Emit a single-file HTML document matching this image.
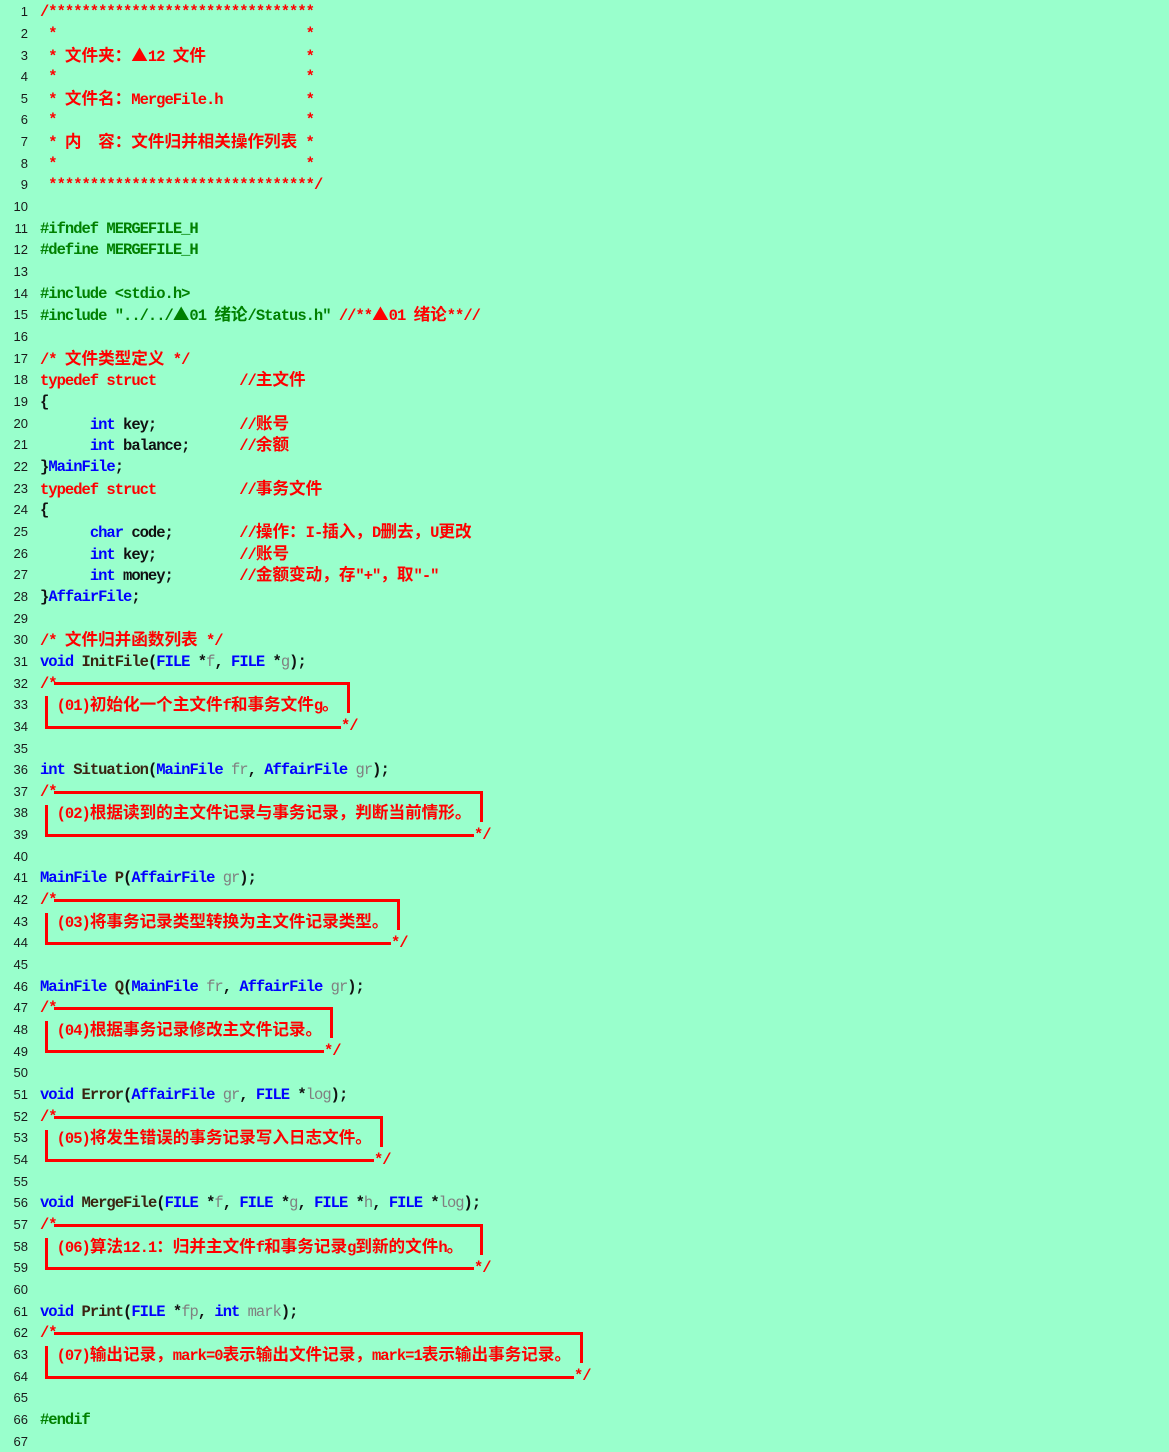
<!DOCTYPE html>
<html><head><meta charset="utf-8">
<style>
html,body{margin:0;padding:0;}
body{width:1169px;height:1451px;background:#99FFCC;position:relative;overflow:hidden;}
#code{position:absolute;left:0;top:1.2px;}
.r{height:21.67px;line-height:21.67px;white-space:pre;position:relative;}
.n{position:absolute;left:0;width:28px;text-align:right;font-family:"Liberation Sans",sans-serif;font-size:13px;color:#1a1a1a;}
.t{position:absolute;left:40px;top:1px;font-family:"Liberation Mono",monospace;font-size:15.5px;letter-spacing:-1px;font-weight:bold;color:#111;line-height:21.67px;}
.z{font-family:"Noto Sans CJK SC",sans-serif;font-size:16.6px;letter-spacing:0;font-weight:bold;line-height:1;vertical-align:baseline;}
.c{color:#FF0000;}
.k{color:#0000FF;}
.p{color:#008000;}
.f{color:#3a2412;}
.g{color:#808080;font-weight:normal;}
.b{position:absolute;background:#FF0000;}
.e{position:absolute;font-family:"Liberation Mono",monospace;font-size:15.5px;letter-spacing:-1px;font-weight:bold;color:#FF0000;line-height:21.67px;height:21.67px;}
</style></head><body>
<div id="code">
<div class="r"><span class="n">1</span><span class="t c">/********************************</span></div>
<div class="r"><span class="n">2</span><span class="t c"> *                              *</span></div>
<div class="r"><span class="n">3</span><span class="t c"> * <span class="z">文件夹：▲</span>12 <span class="z">文件</span>            *</span></div>
<div class="r"><span class="n">4</span><span class="t c"> *                              *</span></div>
<div class="r"><span class="n">5</span><span class="t c"> * <span class="z">文件名：</span>MergeFile.h          *</span></div>
<div class="r"><span class="n">6</span><span class="t c"> *                              *</span></div>
<div class="r"><span class="n">7</span><span class="t c"> * <span class="z">内</span>  <span class="z">容：文件归并相关操作列表</span> *</span></div>
<div class="r"><span class="n">8</span><span class="t c"> *                              *</span></div>
<div class="r"><span class="n">9</span><span class="t c"> ********************************/</span></div>
<div class="r"><span class="n">10</span></div>
<div class="r"><span class="n">11</span><span class="t p">#ifndef MERGEFILE_H</span></div>
<div class="r"><span class="n">12</span><span class="t p">#define MERGEFILE_H</span></div>
<div class="r"><span class="n">13</span></div>
<div class="r"><span class="n">14</span><span class="t p">#include &lt;stdio.h&gt;</span></div>
<div class="r"><span class="n">15</span><span class="t"><span class="p">#include "../../<span class="z">▲</span>01 <span class="z">绪论</span>/Status.h"</span> <span class="c">//**<span class="z">▲</span>01 <span class="z">绪论</span>**//</span></span></div>
<div class="r"><span class="n">16</span></div>
<div class="r"><span class="n">17</span><span class="t c">/* <span class="z">文件类型定义</span> */</span></div>
<div class="r"><span class="n">18</span><span class="t c">typedef struct          //<span class="z">主文件</span></span></div>
<div class="r"><span class="n">19</span><span class="t">{</span></div>
<div class="r"><span class="n">20</span><span class="t">      <span class="k">int</span> key;          <span class="c">//<span class="z">账号</span></span></span></div>
<div class="r"><span class="n">21</span><span class="t">      <span class="k">int</span> balance;      <span class="c">//<span class="z">余额</span></span></span></div>
<div class="r"><span class="n">22</span><span class="t">}<span class="k">MainFile</span>;</span></div>
<div class="r"><span class="n">23</span><span class="t c">typedef struct          //<span class="z">事务文件</span></span></div>
<div class="r"><span class="n">24</span><span class="t">{</span></div>
<div class="r"><span class="n">25</span><span class="t">      <span class="k">char</span> code;        <span class="c">//<span class="z">操作：</span>I-<span class="z">插入，</span>D<span class="z">删去，</span>U<span class="z">更改</span></span></span></div>
<div class="r"><span class="n">26</span><span class="t">      <span class="k">int</span> key;          <span class="c">//<span class="z">账号</span></span></span></div>
<div class="r"><span class="n">27</span><span class="t">      <span class="k">int</span> money;        <span class="c">//<span class="z">金额变动，存</span>"+"<span class="z">，取</span>"-"</span></span></div>
<div class="r"><span class="n">28</span><span class="t">}<span class="k">AffairFile</span>;</span></div>
<div class="r"><span class="n">29</span></div>
<div class="r"><span class="n">30</span><span class="t c">/* <span class="z">文件归并函数列表</span> */</span></div>
<div class="r"><span class="n">31</span><span class="t"><span class="k">void</span> <span class="f">InitFile</span>(<span class="k">FILE</span> *<span class="g">f</span>, <span class="k">FILE</span> *<span class="g">g</span>);</span></div>
<div class="r"><span class="n">32</span><span class="t c">/*</span></div>
<div class="r"><span class="n">33</span><span class="t c">  (01)<span class="z">初始化一个主文件</span>f<span class="z">和事务文件</span>g<span class="z">。</span></span></div>
<div class="r"><span class="n">34</span></div>
<div class="r"><span class="n">35</span></div>
<div class="r"><span class="n">36</span><span class="t"><span class="k">int</span> <span class="f">Situation</span>(<span class="k">MainFile</span> <span class="g">fr</span>, <span class="k">AffairFile</span> <span class="g">gr</span>);</span></div>
<div class="r"><span class="n">37</span><span class="t c">/*</span></div>
<div class="r"><span class="n">38</span><span class="t c">  (02)<span class="z">根据读到的主文件记录与事务记录，判断当前情形。</span></span></div>
<div class="r"><span class="n">39</span></div>
<div class="r"><span class="n">40</span></div>
<div class="r"><span class="n">41</span><span class="t"><span class="k">MainFile</span> <span class="f">P</span>(<span class="k">AffairFile</span> <span class="g">gr</span>);</span></div>
<div class="r"><span class="n">42</span><span class="t c">/*</span></div>
<div class="r"><span class="n">43</span><span class="t c">  (03)<span class="z">将事务记录类型转换为主文件记录类型。</span></span></div>
<div class="r"><span class="n">44</span></div>
<div class="r"><span class="n">45</span></div>
<div class="r"><span class="n">46</span><span class="t"><span class="k">MainFile</span> <span class="f">Q</span>(<span class="k">MainFile</span> <span class="g">fr</span>, <span class="k">AffairFile</span> <span class="g">gr</span>);</span></div>
<div class="r"><span class="n">47</span><span class="t c">/*</span></div>
<div class="r"><span class="n">48</span><span class="t c">  (04)<span class="z">根据事务记录修改主文件记录。</span></span></div>
<div class="r"><span class="n">49</span></div>
<div class="r"><span class="n">50</span></div>
<div class="r"><span class="n">51</span><span class="t"><span class="k">void</span> <span class="f">Error</span>(<span class="k">AffairFile</span> <span class="g">gr</span>, <span class="k">FILE</span> *<span class="g">log</span>);</span></div>
<div class="r"><span class="n">52</span><span class="t c">/*</span></div>
<div class="r"><span class="n">53</span><span class="t c">  (05)<span class="z">将发生错误的事务记录写入日志文件。</span></span></div>
<div class="r"><span class="n">54</span></div>
<div class="r"><span class="n">55</span></div>
<div class="r"><span class="n">56</span><span class="t"><span class="k">void</span> <span class="f">MergeFile</span>(<span class="k">FILE</span> *<span class="g">f</span>, <span class="k">FILE</span> *<span class="g">g</span>, <span class="k">FILE</span> *<span class="g">h</span>, <span class="k">FILE</span> *<span class="g">log</span>);</span></div>
<div class="r"><span class="n">57</span><span class="t c">/*</span></div>
<div class="r"><span class="n">58</span><span class="t c">  (06)<span class="z">算法</span>12.1<span class="z">：归并主文件</span>f<span class="z">和事务记录</span>g<span class="z">到新的文件</span>h<span class="z">。</span></span></div>
<div class="r"><span class="n">59</span></div>
<div class="r"><span class="n">60</span></div>
<div class="r"><span class="n">61</span><span class="t"><span class="k">void</span> <span class="f">Print</span>(<span class="k">FILE</span> *<span class="g">fp</span>, <span class="k">int</span> <span class="g">mark</span>);</span></div>
<div class="r"><span class="n">62</span><span class="t c">/*</span></div>
<div class="r"><span class="n">63</span><span class="t c">  (07)<span class="z">输出记录，</span>mark=0<span class="z">表示输出文件记录，</span>mark=1<span class="z">表示输出事务记录。</span></span></div>
<div class="r"><span class="n">64</span></div>
<div class="r"><span class="n">65</span></div>
<div class="r"><span class="n">66</span><span class="t p">#endif</span></div>
<div class="r"><span class="n">67</span></div>
</div>

<div class="b" style="left:54px;top:682px;width:295px;height:3px"></div>
<div class="b" style="left:347px;top:682px;width:3px;height:31px"></div>
<div class="b" style="left:45px;top:696px;width:3px;height:33px"></div>
<div class="b" style="left:45px;top:726px;width:296px;height:3px"></div>
<div class="e" style="left:341px;top:716px">*/</div>

<div class="b" style="left:54px;top:791px;width:428px;height:3px"></div>
<div class="b" style="left:480px;top:791px;width:3px;height:31px"></div>
<div class="b" style="left:45px;top:805px;width:3px;height:32px"></div>
<div class="b" style="left:45px;top:834px;width:429px;height:3px"></div>
<div class="e" style="left:474px;top:825px">*/</div>

<div class="b" style="left:54px;top:899px;width:345px;height:3px"></div>
<div class="b" style="left:397px;top:899px;width:3px;height:31px"></div>
<div class="b" style="left:45px;top:913px;width:3px;height:32px"></div>
<div class="b" style="left:45px;top:942px;width:346px;height:3px"></div>
<div class="e" style="left:391px;top:933px">*/</div>

<div class="b" style="left:54px;top:1007px;width:278px;height:3px"></div>
<div class="b" style="left:330px;top:1007px;width:3px;height:31px"></div>
<div class="b" style="left:45px;top:1021px;width:3px;height:32px"></div>
<div class="b" style="left:45px;top:1050px;width:279px;height:3px"></div>
<div class="e" style="left:324px;top:1041px">*/</div>

<div class="b" style="left:54px;top:1116px;width:328px;height:3px"></div>
<div class="b" style="left:380px;top:1116px;width:3px;height:31px"></div>
<div class="b" style="left:45px;top:1130px;width:3px;height:32px"></div>
<div class="b" style="left:45px;top:1159px;width:329px;height:3px"></div>
<div class="e" style="left:374px;top:1150px">*/</div>

<div class="b" style="left:54px;top:1224px;width:428px;height:3px"></div>
<div class="b" style="left:480px;top:1224px;width:3px;height:31px"></div>
<div class="b" style="left:45px;top:1238px;width:3px;height:32px"></div>
<div class="b" style="left:45px;top:1267px;width:429px;height:3px"></div>
<div class="e" style="left:474px;top:1258px">*/</div>

<div class="b" style="left:54px;top:1332px;width:528px;height:3px"></div>
<div class="b" style="left:580px;top:1332px;width:3px;height:31px"></div>
<div class="b" style="left:45px;top:1346px;width:3px;height:32px"></div>
<div class="b" style="left:45px;top:1376px;width:529px;height:3px"></div>
<div class="e" style="left:574px;top:1366px">*/</div>
</body></html>
